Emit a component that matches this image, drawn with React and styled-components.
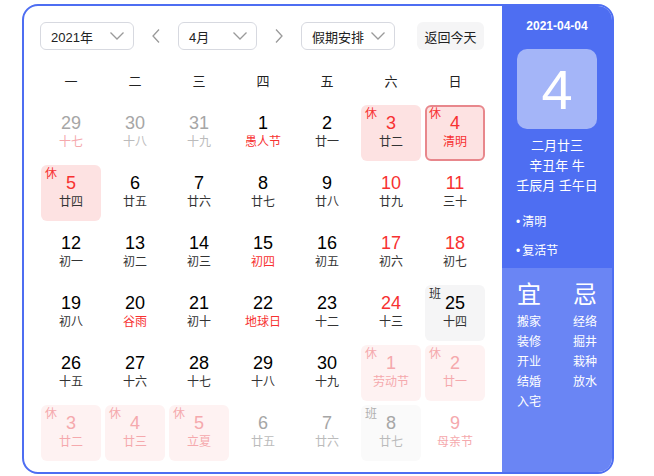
import React from 'react';
import styled, { createGlobalStyle } from 'styled-components';

const GlobalStyle = createGlobalStyle`
  body {
    margin: 0;
    background: #ffffff;
    font-family: 'Liberation Sans', 'Noto Sans CJK SC', sans-serif;
  }
`;

const BLUE = '#4e6ef2';
const RED = '#f73131';

const Page = styled.div`
  padding: 4px 0 0 22px;
`;

const Card = styled.div`
  display: flex;
  width: 592px;
  height: 470px;
  box-sizing: border-box;
  border: 2px solid ${BLUE};
  border-radius: 16px;
  overflow: hidden;
  background: #ffffff;
`;

const Main = styled.div`
  width: 478px;
  display: flex;
  flex-direction: column;
  padding: 16px 0 0 16px;
  box-sizing: border-box;
`;

const Toolbar = styled.div`
  display: flex;
  align-items: center;
  height: 28px;
`;

const Select = styled.div`
  display: flex;
  align-items: center;
  justify-content: space-between;
  box-sizing: border-box;
  width: ${(p) => p.$width}px;
  height: 28px;
  padding: 0 8px 0 10px;
  border: 1px solid #d7d9e0;
  border-radius: 6px;
  font-size: 13px;
  color: #222222;
`;

const ArrowButton = styled.div`
  display: flex;
  align-items: center;
  justify-content: center;
  width: 44px;
  height: 28px;
`;

const TodayButton = styled.div`
  display: flex;
  align-items: center;
  justify-content: center;
  margin-left: 22px;
  width: 67px;
  height: 28px;
  border-radius: 6px;
  background: #f5f5f6;
  font-size: 13px;
  color: #222222;
`;

const WeekHeader = styled.div`
  display: grid;
  grid-template-columns: repeat(7, 60px);
  column-gap: 4px;
  margin: 20px 0 11px 1px;
  height: 24px;
  line-height: 24px;
  font-size: 13px;
  color: #222222;
  text-align: center;
`;

const Grid = styled.div`
  display: grid;
  grid-template-columns: repeat(7, 60px);
  grid-auto-rows: 56px;
  gap: 4px;
  margin-left: 1px;
`;

const cellBg = (p) => {
  if (p.$mark === 'rest') return p.$other ? '#fef2f2' : '#fde2e2';
  if (p.$mark === 'work') return p.$other ? '#fafafa' : '#f5f5f6';
  return 'transparent';
};

const Cell = styled.div`
  position: relative;
  box-sizing: border-box;
  display: flex;
  flex-direction: column;
  align-items: center;
  padding-top: ${(p) => (p.$today ? 6 : 8)}px;
  border-radius: 6px;
  background: ${cellBg};
  border: ${(p) => (p.$today ? '2px solid #e8878c' : 'none')};
`;

const toneColor = {
  normal: '#000000',
  dim: '#a6a6a6',
  red: RED,
  pink: '#f5a9ad',
};

const lunarColor = {
  normal: '#333333',
  dim: '#bbbbbb',
  red: RED,
  pink: '#f5a9ad',
};

const DayNum = styled.div`
  font-size: 18px;
  line-height: 20px;
  color: ${(p) => toneColor[p.$tone]};
`;

const Lunar = styled.div`
  margin-top: 1px;
  font-size: 12px;
  line-height: 16px;
  color: ${(p) => lunarColor[p.$tone]};
`;

const Tag = styled.span`
  position: absolute;
  top: ${(p) => (p.$today ? 0 : 2)}px;
  left: ${(p) => (p.$today ? 2 : 4)}px;
  font-size: 12px;
  line-height: 14px;
  color: ${(p) => p.$color};
`;

const Side = styled.div`
  flex: 1;
  display: flex;
  flex-direction: column;
  color: #ffffff;
`;

const SideTop = styled.div`
  height: 262px;
  background: ${BLUE};
  display: flex;
  flex-direction: column;
  align-items: center;
  padding-top: 12px;
  box-sizing: border-box;
`;

const DateText = styled.div`
  font-size: 12px;
  font-weight: 700;
  line-height: 16px;
`;

const BigDay = styled.div`
  margin-top: 15px;
  width: 80px;
  height: 80px;
  border-radius: 10px;
  background: #a4b5f8;
  display: flex;
  align-items: center;
  justify-content: center;
  font-size: 56px;
  font-weight: 300;
`;

const LunarInfo = styled.div`
  margin-top: 7px;
  font-size: 13px;
  line-height: 20px;
  text-align: center;
`;

const Festivals = styled.ul`
  list-style: none;
  align-self: stretch;
  margin: 12px 0 0 14px;
  padding: 0;
  font-size: 12px;
  line-height: 29px;
  & li::before {
    content: '•';
    margin-right: 2px;
  }
`;

const SideBottom = styled.div`
  flex: 1;
  background: #6a85f4;
  display: flex;
  gap: 32px;
  padding: 12px 0 0 15px;
`;

const Column = styled.div`
  display: flex;
  flex-direction: column;
`;

const Heading = styled.div`
  font-size: 24px;
  line-height: 30px;
  margin-bottom: 2px;
`;

const Item = styled.div`
  font-size: 12px;
  line-height: 20px;
`;

const ChevronDown = () => (
  <svg width="16" height="10" viewBox="0 0 16 10" fill="none">
    <path d="M1.5 1.5 L8 8 L14.5 1.5" stroke="#9a9a9a" strokeWidth="1.3" />
  </svg>
);

const ChevronSide = ({ right }) => (
  <svg width="10" height="16" viewBox="0 0 10 16" fill="none">
    <path
      d={right ? 'M2 1.5 L8 8 L2 14.5' : 'M8 1.5 L2 8 L8 14.5'}
      stroke="#9a9a9a"
      strokeWidth="1.3"
    />
  </svg>
);

// [day, lunar, dayTone, lunarTone, mark, other, today]
const days = [
  ['29', '十七', 'dim', 'pink', null, true],
  ['30', '十八', 'dim', 'dim', null, true],
  ['31', '十九', 'dim', 'dim', null, true],
  ['1', '愚人节', 'normal', 'red'],
  ['2', '廿一', 'normal', 'normal'],
  ['3', '廿二', 'red', 'normal', 'rest'],
  ['4', '清明', 'red', 'red', 'rest', false, true],
  ['5', '廿四', 'red', 'normal', 'rest'],
  ['6', '廿五', 'normal', 'normal'],
  ['7', '廿六', 'normal', 'normal'],
  ['8', '廿七', 'normal', 'normal'],
  ['9', '廿八', 'normal', 'normal'],
  ['10', '廿九', 'red', 'normal'],
  ['11', '三十', 'red', 'normal'],
  ['12', '初一', 'normal', 'normal'],
  ['13', '初二', 'normal', 'normal'],
  ['14', '初三', 'normal', 'normal'],
  ['15', '初四', 'normal', 'red'],
  ['16', '初五', 'normal', 'normal'],
  ['17', '初六', 'red', 'normal'],
  ['18', '初七', 'red', 'normal'],
  ['19', '初八', 'normal', 'normal'],
  ['20', '谷雨', 'normal', 'red'],
  ['21', '初十', 'normal', 'normal'],
  ['22', '地球日', 'normal', 'red'],
  ['23', '十二', 'normal', 'normal'],
  ['24', '十三', 'red', 'normal'],
  ['25', '十四', 'normal', 'normal', 'work'],
  ['26', '十五', 'normal', 'normal'],
  ['27', '十六', 'normal', 'normal'],
  ['28', '十七', 'normal', 'normal'],
  ['29', '十八', 'normal', 'normal'],
  ['30', '十九', 'normal', 'normal'],
  ['1', '劳动节', 'pink', 'pink', 'rest', true],
  ['2', '廿一', 'pink', 'pink', 'rest', true],
  ['3', '廿二', 'pink', 'pink', 'rest', true],
  ['4', '廿三', 'pink', 'pink', 'rest', true],
  ['5', '立夏', 'pink', 'pink', 'rest', true],
  ['6', '廿五', 'dim', 'dim', null, true],
  ['7', '廿六', 'dim', 'dim', null, true],
  ['8', '廿七', 'dim', 'dim', 'work', true],
  ['9', '母亲节', 'pink', 'pink', null, true],
];

const tagColor = (mark, other) => {
  if (mark === 'rest') return other ? '#f5a9ad' : RED;
  return other ? '#b0b0b0' : '#333333';
};

function DayCell({ d }) {
  const [day, lunar, tone, lunarTone, mark, other, today] = d;
  return (
    <Cell $mark={mark} $other={other} $today={today}>
      {mark && (
        <Tag $today={today} $color={tagColor(mark, other)}>
          {mark === 'rest' ? '休' : '班'}
        </Tag>
      )}
      <DayNum $tone={tone}>{day}</DayNum>
      <Lunar $tone={lunarTone}>{lunar}</Lunar>
    </Cell>
  );
}

export default function App() {
  return (
    <Page>
      <GlobalStyle />
      <Card>
        <Main>
          <Toolbar>
            <Select $width={94}>
              <span>2021年</span>
              <ChevronDown />
            </Select>
            <ArrowButton>
              <ChevronSide />
            </ArrowButton>
            <Select $width={79}>
              <span>4月</span>
              <ChevronDown />
            </Select>
            <ArrowButton>
              <ChevronSide right />
            </ArrowButton>
            <Select $width={94}>
              <span>假期安排</span>
              <ChevronDown />
            </Select>
            <TodayButton>返回今天</TodayButton>
          </Toolbar>
          <WeekHeader>
            {['一', '二', '三', '四', '五', '六', '日'].map((w) => (
              <div key={w}>{w}</div>
            ))}
          </WeekHeader>
          <Grid>
            {days.map((d, i) => (
              <DayCell key={i} d={d} />
            ))}
          </Grid>
        </Main>
        <Side>
          <SideTop>
            <DateText>2021-04-04</DateText>
            <BigDay>4</BigDay>
            <LunarInfo>
              <div>二月廿三</div>
              <div>辛丑年 牛</div>
              <div>壬辰月 壬午日</div>
            </LunarInfo>
            <Festivals>
              <li>清明</li>
              <li>复活节</li>
            </Festivals>
          </SideTop>
          <SideBottom>
            <Column>
              <Heading>宜</Heading>
              {['搬家', '装修', '开业', '结婚', '入宅'].map((t) => (
                <Item key={t}>{t}</Item>
              ))}
            </Column>
            <Column>
              <Heading>忌</Heading>
              {['经络', '掘井', '栽种', '放水'].map((t) => (
                <Item key={t}>{t}</Item>
              ))}
            </Column>
          </SideBottom>
        </Side>
      </Card>
    </Page>
  );
}
